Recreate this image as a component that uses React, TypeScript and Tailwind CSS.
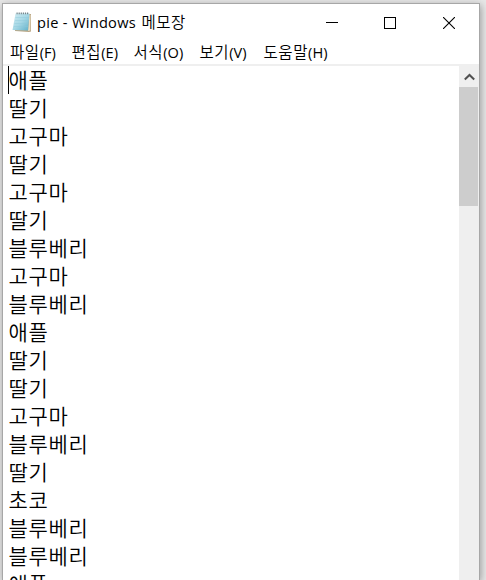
const lines = [
  '애플', '딸기', '고구마', '딸기', '고구마', '딸기', '블루베리', '고구마', '블루베리', '애플',
  '딸기', '딸기', '고구마', '블루베리', '딸기', '초코', '블루베리', '블루베리', '애플',
];

const menus = [
  { label: '파일', key: '(F)', width: 'w-[61.5px]' },
  { label: '편집', key: '(E)', width: 'w-[62px]' },
  { label: '서식', key: '(O)', width: 'w-[66px]' },
  { label: '보기', key: '(V)', width: 'w-[64px]' },
  { label: '도움말', key: '(H)', width: 'w-[70px]' },
];

function NotepadIcon() {
  return (
    <svg width="20" height="21" viewBox="0 0 20 21" className="shrink-0">
      <defs>
        <linearGradient id="cover" x1="0" y1="0" x2="1" y2="1">
          <stop offset="0" stopColor="#d3edf4" />
          <stop offset="0.5" stopColor="#a5d7e5" />
          <stop offset="1" stopColor="#5fb0c9" />
        </linearGradient>
      </defs>
      <path d="M4 2 L19 2 L19 19.5 L17 20 L3 19 Z" fill="#b9a684" />
      <path d="M17.5 2.5 L18.5 3 L18.3 18.5 L16 19 Z" fill="#e9dcc2" />
      <path d="M3.5 1.5 L17.5 1.5 L16 18.5 L0.5 18 Z" fill="url(#cover)" />
      <path d="M3.4 5.5H17M3 8.5H16.8M2.4 11.5H16.5M1.8 14.5H16.2" stroke="#8ac7d8" strokeWidth="0.4" />
      <path d="M4.5 1.4H17" stroke="#77868c" strokeWidth="1.6" strokeDasharray="1.2 0.9" />
    </svg>
  );
}

function TitleBar() {
  return (
    <div className="flex h-[37px] shrink-0 items-center">
      <div className="flex items-center gap-[5px] pl-[9px]">
        <NotepadIcon />
        <h1 className="flex items-baseline whitespace-pre pb-px text-[14.6px] leading-5">
          <span className="w-[104.5px] font-normal tracking-[0.3px]">pie - Windows </span>
          <span className="text-[15.5px] tracking-[0.5px]">메모장</span>
        </h1>
      </div>
      <div className="ml-auto flex h-full">
        <button type="button" aria-label="최소화" className="flex w-[58px] items-center justify-center">
          <svg width="12" height="12" shapeRendering="crispEdges"><path d="M0 5.5H12" stroke="black" /></svg>
        </button>
        <button type="button" aria-label="최대화" className="flex w-[58px] items-center justify-center">
          <svg width="12" height="12" fill="none" shapeRendering="crispEdges"><path d="M.5 .5H11.5V11.5H.5Z" stroke="black" /></svg>
        </button>
        <button type="button" aria-label="닫기" className="flex w-[60px] items-center justify-center">
          <svg width="12" height="12"><path d="M0 0L12 12M12 0L0 12" stroke="black" strokeWidth="1.1" /></svg>
        </button>
      </div>
    </div>
  );
}

function MenuBar() {
  return (
    <nav className="flex h-[23px] shrink-0 items-center whitespace-nowrap pl-[7px] pt-px text-[15px]">
      {menus.map((menu) => (
        <span key={menu.label} className={menu.width}>
          <span className="text-[15.5px] tracking-[0.6px]">{menu.label}</span>
          <span className="text-[14.6px] font-normal">{menu.key}</span>
        </span>
      ))}
    </nav>
  );
}

function ScrollBar() {
  return (
    <div className="flex w-5 shrink-0 flex-col bg-[#efefef]">
      <div className="flex h-[21px] items-center justify-center">
        <svg width="11" height="8" fill="none"><path d="M.8 6.5L5.5 2L10.2 6.5" stroke="#505050" strokeWidth="2" /></svg>
      </div>
      <div className="h-[119px] w-[19px] bg-[#cdcdcd]" />
    </div>
  );
}

export default function App() {
  return (
    <div className="h-[580px] w-[486px] overflow-hidden bg-[#e8e8e8] pl-[2px] pt-[3px] font-['Open_Sans','Noto_Sans_CJK_KR',sans-serif] font-[350] text-black">
      <div className="flex h-[577px] w-[478px] flex-col overflow-hidden border border-b-0 border-[#a7a7a7] bg-white shadow-[1px_2px_8px_#999]">
        <TitleBar />
        <MenuBar />
        <div className="flex min-h-0 flex-1 border-t-2 border-[#efefef]">
          <div className="relative min-w-0 flex-1 overflow-hidden pl-[5.5px] text-[21px] leading-7 tracking-[0.65px]">
            <div className="absolute left-[5px] top-0 h-7 w-px bg-black" />
            {lines.map((line, i) => (
              <div key={i} className="h-7 whitespace-nowrap">{line}</div>
            ))}
          </div>
          <ScrollBar />
        </div>
      </div>
    </div>
  );
}
